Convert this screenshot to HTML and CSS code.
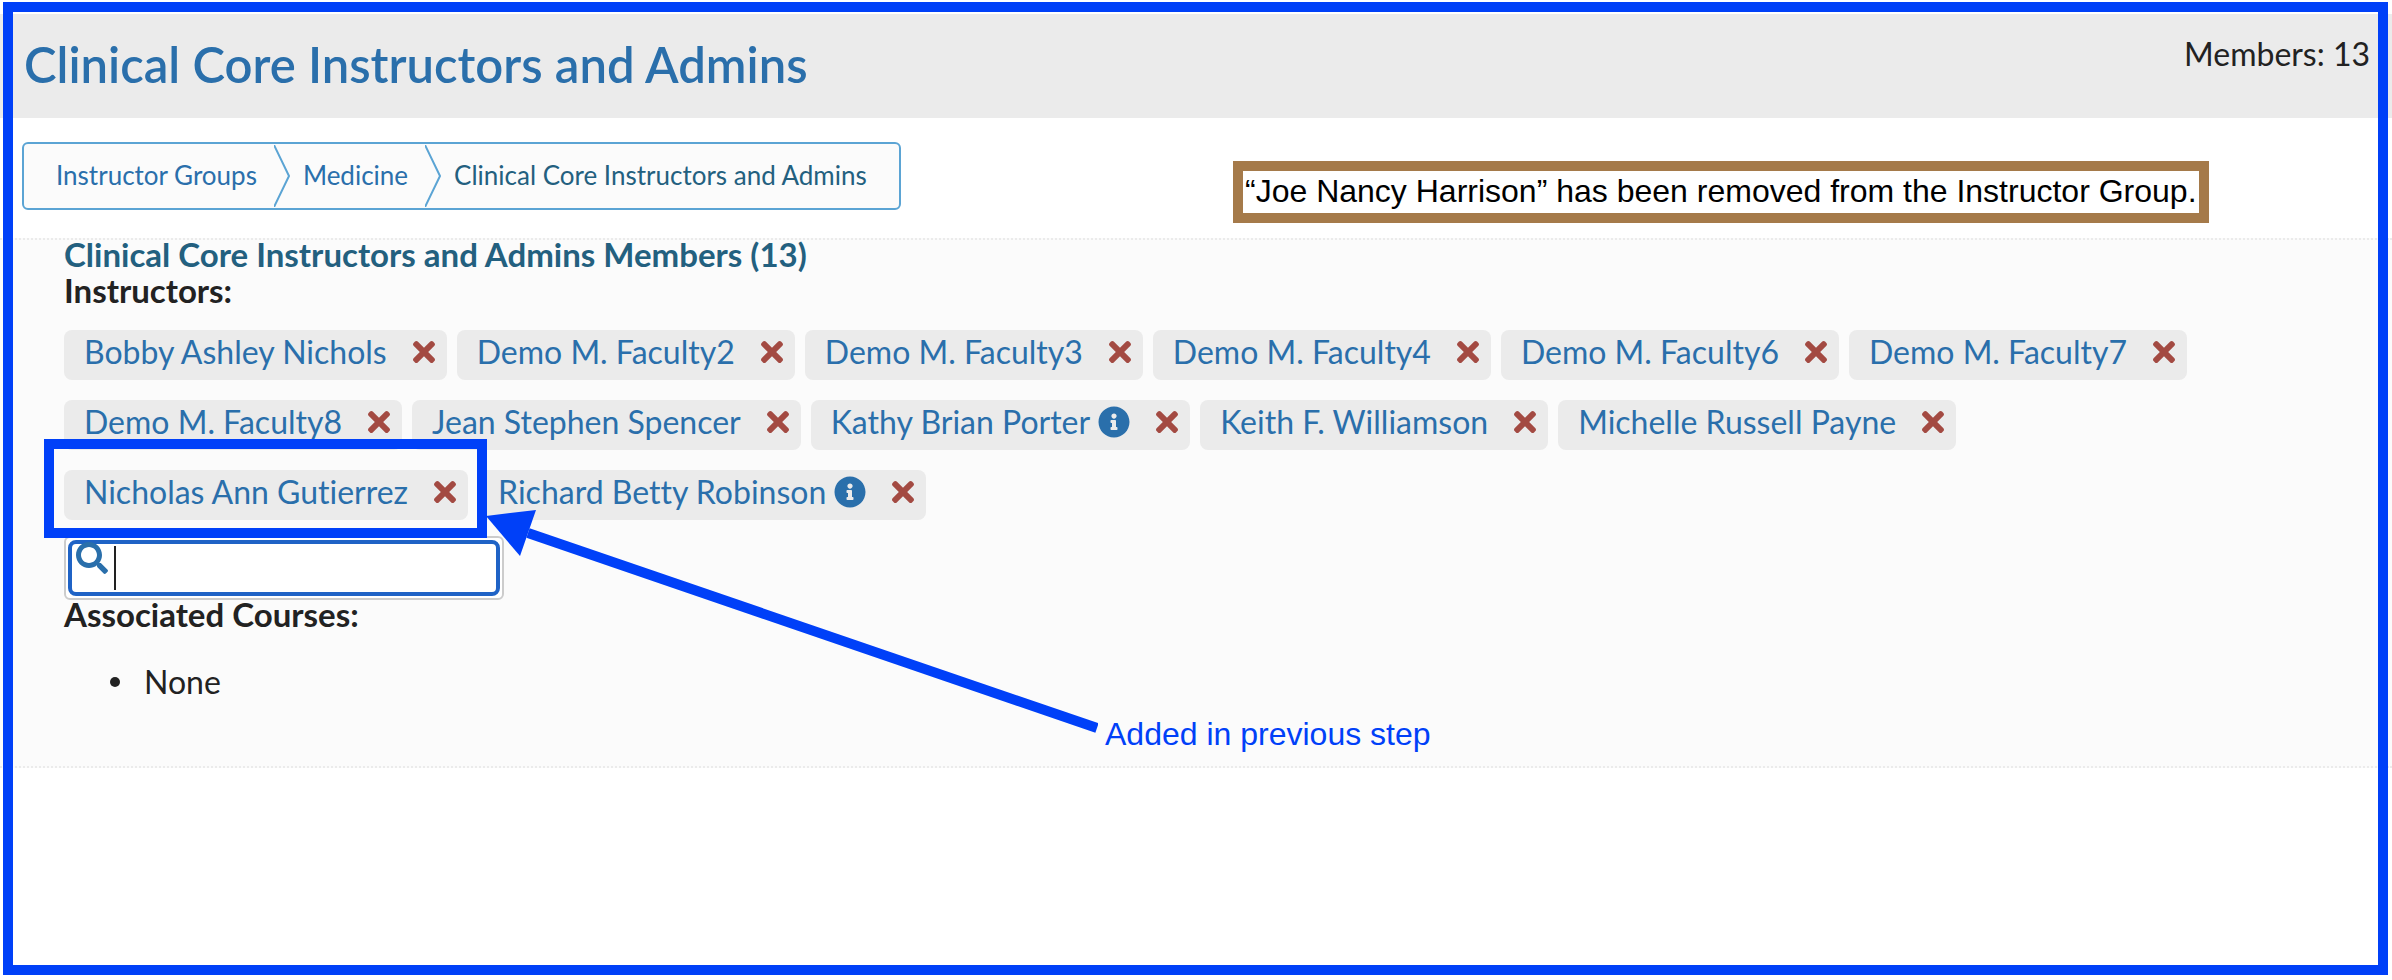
FILE: index.html
```html
<!DOCTYPE html>
<html lang="en">
<head>
<meta charset="utf-8">
<title>Clinical Core Instructors and Admins</title>
<link rel="stylesheet" href="styles.css">
</head>
<body>
<svg class="sprite" aria-hidden="true">
  <symbol id="x" viewBox="0 0 352 512"><path d="M242.72 256l100.07-100.07c12.28-12.28 12.28-32.19 0-44.48l-22.24-22.24c-12.28-12.28-32.19-12.28-44.48 0L176 189.28 75.93 89.21c-12.28-12.28-32.19-12.28-44.48 0L9.21 111.45c-12.28 12.28-12.28 32.19 0 44.48L109.28 256 9.21 356.07c-12.28 12.28-12.28 32.19 0 44.48l22.24 22.24c12.28 12.28 32.2 12.28 44.48 0L176 322.72l100.07 100.07c12.28 12.28 32.2 12.28 44.48 0l22.24-22.24c12.28-12.28 12.28-32.19 0-44.48L242.72 256z"/></symbol>
  <symbol id="info" viewBox="0 0 512 512"><path d="M256 8C119.043 8 8 119.083 8 256c0 136.997 111.043 248 248 248s248-111.003 248-248C504 119.083 392.957 8 256 8zm0 110c23.196 0 42 18.804 42 42s-18.804 42-42 42-42-18.804-42-42 18.804-42 42-42zm56 254c0 6.627-5.373 12-12 12h-88c-6.627 0-12-5.373-12-12v-24c0-6.627 5.373-12 12-12h12v-64h-12c-6.627 0-12-5.373-12-12v-24c0-6.627 5.373-12 12-12h64c6.627 0 12 5.373 12 12v100h12c6.627 0 12 5.373 12 12v24z"/></symbol>
</svg>
<div class="page">
  <header class="page-header">
    <h1 class="page-title">Clinical Core Instructors and Admins</h1>
    <p class="member-count">Members: 13</p>
  </header>

  <nav class="crumb-bar" aria-label="Breadcrumb">
    <ol class="crumbs">
      <li class="crumb"><a href="#groups">Instructor Groups</a></li>
      <li class="crumb">
        <svg class="chevron" viewBox="0 0 16 62" aria-hidden="true"><path d="M0 0L15 31L0 62"/></svg>
        <a href="#medicine">Medicine</a>
      </li>
      <li class="crumb crumb-current" aria-current="page">
        <svg class="chevron" viewBox="0 0 16 62" aria-hidden="true"><path d="M0 0L15 31L0 62"/></svg>
        <span>Clinical Core Instructors and Admins</span>
      </li>
    </ol>
  </nav>

  <main class="group">
    <h2 class="group-title">Clinical Core Instructors and Admins Members (13)</h2>
    <h3 class="label">Instructors:</h3>
    <ul class="chips">
      <li><button class="chip" type="button">Bobby Ashley Nichols<svg class="remove"><use href="#x"/></svg></button></li>
      <li><button class="chip" type="button">Demo M. Faculty2<svg class="remove"><use href="#x"/></svg></button></li>
      <li><button class="chip" type="button">Demo M. Faculty3<svg class="remove"><use href="#x"/></svg></button></li>
      <li><button class="chip" type="button">Demo M. Faculty4<svg class="remove"><use href="#x"/></svg></button></li>
      <li><button class="chip" type="button">Demo M. Faculty6<svg class="remove"><use href="#x"/></svg></button></li>
      <li><button class="chip" type="button">Demo M. Faculty7<svg class="remove"><use href="#x"/></svg></button></li>
      <li><button class="chip" type="button">Demo M. Faculty8<svg class="remove"><use href="#x"/></svg></button></li>
      <li><button class="chip" type="button">Jean Stephen Spencer<svg class="remove"><use href="#x"/></svg></button></li>
      <li><button class="chip" type="button">Kathy Brian Porter<svg class="info"><use href="#info"/></svg><svg class="remove"><use href="#x"/></svg></button></li>
      <li><button class="chip" type="button">Keith F. Williamson<svg class="remove"><use href="#x"/></svg></button></li>
      <li><button class="chip" type="button">Michelle Russell Payne<svg class="remove"><use href="#x"/></svg></button></li>
      <li><button class="chip" type="button">Nicholas Ann Gutierrez<svg class="remove"><use href="#x"/></svg></button></li>
      <li><button class="chip" type="button">Richard Betty Robinson<svg class="info"><use href="#info"/></svg><svg class="remove"><use href="#x"/></svg></button></li>
    </ul>
    <div class="search">
      <svg class="search-icon" viewBox="0 0 512 512" aria-hidden="true"><path d="M505 442.700L405.300 343c-4.500-4.500-10.600-7-17-7H372c27.600-35.300 44-79.700 44-128C416 93.100 322.900 0 208 0S0 93.100 0 208s93.100 208 208 208c48.300 0 92.700-16.400 128-44v16.300c0 6.400 2.500 12.500 7 17l99.700 99.700c9.400 9.400 24.600 9.400 33.900 0l28.300-28.300c9.400-9.400 9.400-24.600.1-34zM208 336c-70.700 0-128-57.200-128-128 0-70.700 57.200-128 128-128 70.700 0 128 57.200 128 128 0 70.700-57.200 128-128 128z"/></svg>
      <span class="caret"></span>
      <input class="search-input" type="search" aria-label="Search instructors">
    </div>
    <h3 class="label">Associated Courses:</h3>
    <ul class="courses"><li>None</li></ul>
  </main>

  <p class="notice">“Joe Nancy Harrison” has been removed from the Instructor Group.</p>
  <div class="highlight"></div>
  <svg class="arrow" viewBox="0 0 612 224" aria-hidden="true"><path d="M42 23L611 218" stroke="#0040f8" stroke-width="10"/><path d="M0 6L50 0L34 46Z" fill="#0040f8"/></svg>
  <p class="arrow-note">Added in previous step</p>
  <div class="frame"></div>
</div>
</body>
</html>
```
FILE: styles.css
```css
* { box-sizing: border-box; }

body {
  margin: 0;
  background: #fff;
  color: #222;
  font: 32px/36px Lato, "Open Sans", sans-serif;
  font-variant-ligatures: none;
}

h1, h2, h3, p, ul, ol { margin: 0; padding: 0; }
a { color: inherit; text-decoration: none; }
.sprite { display: none; }

.page {
  position: relative;
  min-height: 100vh;
  padding-top: 14px;
}

/* Header */
.page-header {
  display: flex;
  justify-content: space-between;
  align-items: flex-start;
  min-height: 104px;
  padding: 22px 22px 0 24px;
  background: #ebebeb;
}
.page-title {
  color: #2a6fab;
  font-size: 49px;
  font-weight: 600;
  line-height: 56px;
}

/* Breadcrumb */
.crumb-bar { padding: 24px 22px 28px; }
.crumbs {
  display: inline-flex;
  align-items: center;
  height: 68px;
  padding: 0 32px;
  border: 2px solid #5ba4d4;
  border-radius: 6px;
  background: #fbfbfb;
  list-style: none;
  color: #2a6fab;
  font-size: 26px;
  line-height: 32px;
  vertical-align: top;
}
.crumb {
  display: flex;
  align-items: center;
  gap: 13px;
}
.crumb a, .crumb span { padding-bottom: 2px; }
.crumb + .crumb { margin-left: 17px; }
.crumb-current { color: #23607f; }
.chevron {
  width: 16px;
  height: 62px;
  fill: none;
  stroke: #5ba4d4;
  stroke-width: 2;
}

/* Group details */
.group {
  padding: 0 64px 66px;
  border-top: 2px dotted #ebebeb;
  border-bottom: 2px dotted #ebebeb;
  background: #fbfbfb;
}
.group-title {
  margin-top: -4px;
  color: #23607f;
  font-size: 33px;
  line-height: 36px;
}
.label { font-size: 33px; line-height: 36px; }

.chips {
  display: flex;
  flex-wrap: wrap;
  gap: 20px 10px;
  padding: 22px 0 16px;
  list-style: none;
}
.chip {
  display: flex;
  align-items: center;
  height: 50px;
  padding: 0 12px 6px 20px;
  border: 0;
  border-radius: 8px;
  background: #ebebeb;
  color: #2a6fab;
  font: inherit;
  font-variant-ligatures: none;
}
.remove {
  width: 22px;
  height: 32px;
  margin-left: 26px;
  fill: #a34a42;
}
.info {
  width: 32px;
  height: 32px;
  margin-left: 8px;
  fill: #2a6fab;
}

.search {
  position: relative;
  width: 440px;
  height: 64px;
  margin-bottom: -4px;
  padding: 2px;
  border: 2px solid #ccc;
  border-radius: 6px;
  background: #fff;
}
.search-input {
  display: block;
  width: 100%;
  height: 100%;
  padding: 0 8px 0 44px;
  border: 4px solid #1f63c6;
  border-radius: 8px;
  background: #fff;
  font: inherit;
}
.search-icon {
  position: absolute;
  left: 10px;
  top: 4px;
  width: 32px;
  height: 32px;
  fill: #2a6fab;
}
.caret {
  position: absolute;
  left: 48px;
  top: 8px;
  width: 2px;
  height: 44px;
  background: #222;
}

.courses {
  padding: 32px 0 0 46px;
  list-style: none;
}
.courses li {
  display: flex;
  align-items: center;
  gap: 24px;
}
.courses li::before {
  content: "";
  width: 10px;
  height: 10px;
  border-radius: 50%;
  background: #222;
}

/* Annotations over the page */
.notice {
  position: absolute;
  left: 1233px;
  top: 161px;
  padding: 2px 2px 4px;
  border: 10px solid #a57a4a;
  background: #fff;
  color: #000;
  font-family: "Liberation Sans", Arial, sans-serif;
}
.highlight {
  position: absolute;
  left: 44px;
  top: 439px;
  width: 443px;
  height: 99px;
  border: 10px solid #0040f8;
}
.arrow {
  position: absolute;
  left: 486px;
  top: 510px;
  width: 612px;
  height: 224px;
}
.arrow-note {
  position: absolute;
  left: 1105px;
  top: 716px;
  color: #0040f8;
  font-family: "Liberation Sans", Arial, sans-serif;
}
.frame {
  position: absolute;
  inset: 2px 4px 5px 3px;
  border: 10px solid #0040f8;
  pointer-events: none;
}
```
